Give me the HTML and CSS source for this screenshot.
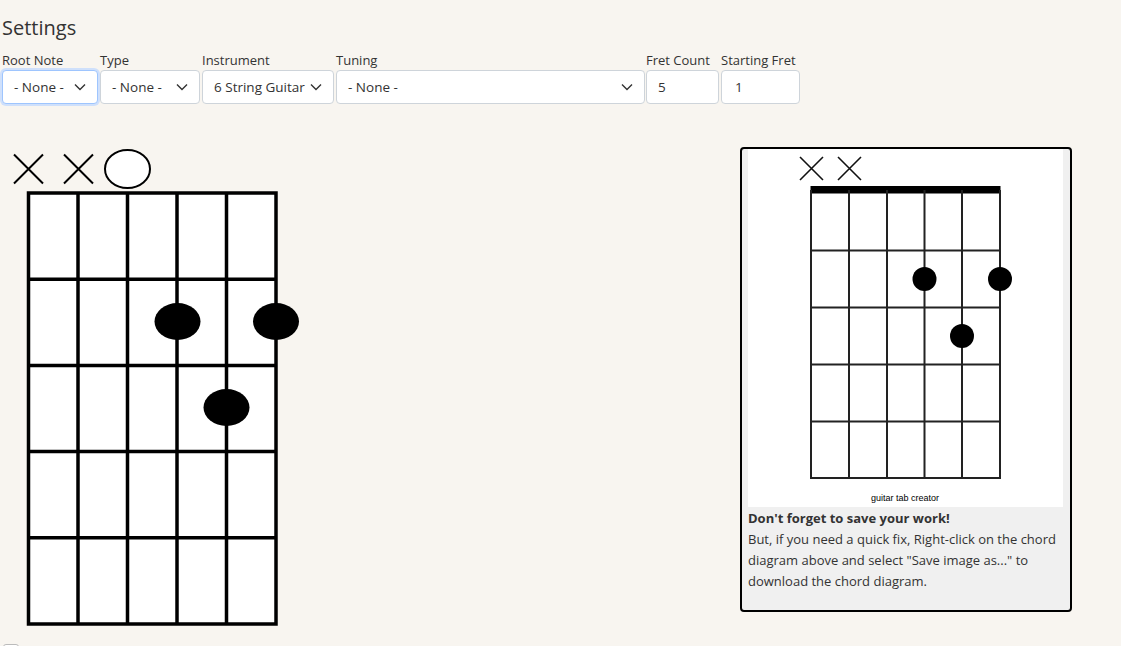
FILE: index.html
```html
<!DOCTYPE html>
<html lang="en">
<head>
<meta charset="utf-8">
<title>Settings</title>
<link rel="stylesheet" href="styles.css">
</head>
<body>
<div class="page">
  <h2 class="title">Settings</h2>
  <div class="form-row">
    <div class="field w-root">
      <label class="lbl">Root Note</label>
      <div class="ctrl focus"><span class="val">- None -</span><svg class="chev" viewBox="0 0 12 8"><path d="M1 1.5 L6 6.5 L11 1.5" fill="none" stroke="#333" stroke-width="1.4"/></svg></div>
    </div>
    <div class="field w-type">
      <label class="lbl">Type</label>
      <div class="ctrl"><span class="val">- None -</span><svg class="chev" viewBox="0 0 12 8"><path d="M1 1.5 L6 6.5 L11 1.5" fill="none" stroke="#333" stroke-width="1.4"/></svg></div>
    </div>
    <div class="field w-inst">
      <label class="lbl">Instrument</label>
      <div class="ctrl"><span class="val">6 String Guitar</span><svg class="chev" viewBox="0 0 12 8"><path d="M1 1.5 L6 6.5 L11 1.5" fill="none" stroke="#333" stroke-width="1.4"/></svg></div>
    </div>
    <div class="field w-tune">
      <label class="lbl">Tuning</label>
      <div class="ctrl"><span class="val">- None -</span><svg class="chev" viewBox="0 0 12 8"><path d="M1 1.5 L6 6.5 L11 1.5" fill="none" stroke="#333" stroke-width="1.4"/></svg></div>
    </div>
    <div class="field w-count">
      <label class="lbl">Fret Count</label>
      <div class="ctrl input"><span class="val">5</span></div>
    </div>
    <div class="field w-start">
      <label class="lbl">Starting Fret</label>
      <div class="ctrl input"><span class="val">1</span></div>
    </div>
  </div>

  <div class="main">
    <svg class="big" viewBox="0 147 320 490" width="320" height="490">
      <g stroke="#000" stroke-width="2" fill="none">
        <path d="M14 154.5 L43 183.5 M43 154.5 L14 183.5"/>
        <path d="M64 154.5 L93 183.5 M93 154.5 L64 183.5"/>
        <ellipse cx="127.5" cy="169" rx="22.5" ry="19" fill="#fff"/>
      </g>
      <rect x="28.5" y="193" width="247.5" height="431" fill="#fff" stroke="#000" stroke-width="3.5"/>
      <g stroke="#000" stroke-width="3.5">
        <line x1="78" y1="193" x2="78" y2="624"/>
        <line x1="127.5" y1="193" x2="127.5" y2="624"/>
        <line x1="177" y1="193" x2="177" y2="624"/>
        <line x1="226.5" y1="193" x2="226.5" y2="624"/>
        <line x1="28.5" y1="279.2" x2="276" y2="279.2"/>
        <line x1="28.5" y1="365.4" x2="276" y2="365.4"/>
        <line x1="28.5" y1="451.6" x2="276" y2="451.6"/>
        <line x1="28.5" y1="537.8" x2="276" y2="537.8"/>
      </g>
      <g fill="#000">
        <ellipse cx="177.5" cy="321.5" rx="23" ry="18.5"/>
        <ellipse cx="276" cy="321.5" rx="23" ry="18.5"/>
        <ellipse cx="226.5" cy="407.5" rx="23" ry="18.5"/>
      </g>
    </svg>

    <div class="card">
      <svg class="small" viewBox="748 149 315 358" width="315" height="358">
        <rect x="748" y="149" width="315" height="358" fill="#fff"/>
        <g stroke="#111" stroke-width="1.6" fill="none">
          <path d="M800 157 L823 180 M823 157 L800 180"/>
          <path d="M838 157 L861 180 M861 157 L838 180"/>
        </g>
        <rect x="810.5" y="186" width="190" height="7.5" fill="#000"/>
        <g stroke="#222" stroke-width="2">
          <line x1="811" y1="190" x2="811" y2="479"/>
          <line x1="849" y1="190" x2="849" y2="479"/>
          <line x1="887" y1="190" x2="887" y2="479"/>
          <line x1="924.5" y1="190" x2="924.5" y2="479"/>
          <line x1="962" y1="190" x2="962" y2="479"/>
          <line x1="1000" y1="190" x2="1000" y2="479"/>
          <line x1="810" y1="250.5" x2="1001" y2="250.5"/>
          <line x1="810" y1="307.5" x2="1001" y2="307.5"/>
          <line x1="810" y1="364.5" x2="1001" y2="364.5"/>
          <line x1="810" y1="421.5" x2="1001" y2="421.5"/>
          <line x1="810" y1="478" x2="1001" y2="478"/>
        </g>
        <g fill="#000">
          <circle cx="924.5" cy="279" r="12"/>
          <circle cx="1000" cy="279" r="12"/>
          <circle cx="962" cy="336" r="12"/>
        </g>
        <text x="905" y="500.5" text-anchor="middle" class="brand">guitar tab creator</text>
      </svg>
      <p class="note"><strong>Don't forget to save your work!</strong><br>But, if you need a quick fix, Right-click on the chord diagram above and select "Save image as..." to download the chord diagram.</p>
    </div>
  </div>
  <div class="check"></div>
</div>
</body>
</html>
```

FILE: styles.css
```css
html, body {
  margin: 0;
  padding: 0;
  height: 646px;
  overflow: hidden;
}
body {
  background: #f8f5f0;
  font-family: "Open Sans", "Noto Sans", sans-serif;
  color: #333;
}
.page {
  padding: 0 0 0 2px;
}
.title {
  margin: 16px 0 0 0;
  font-size: 20px;
  line-height: 24px;
  font-weight: 400;
  color: #333;
}
.form-row {
  display: flex;
  gap: 2px;
  margin-top: 12px;
}
.field {
  display: flex;
  flex-direction: column;
}
.lbl {
  font-size: 13px;
  line-height: 17px;
  margin-bottom: 1px;
  color: #333;
  white-space: nowrap;
}
.ctrl {
  box-sizing: border-box;
  height: 34px;
  background: #fff;
  border: 1px solid #ced4da;
  border-radius: 4px;
  display: flex;
  align-items: center;
  justify-content: space-between;
  padding: 0 11px 0 11px;
  font-size: 13.5px;
  color: #333;
}
.ctrl.focus {
  border-color: #9ec5fe;
  box-shadow: 0 0 0 2px #cfe0fb;
}
.ctrl.input {
  justify-content: flex-start;
}
.val {
  white-space: nowrap;
}
.chev {
  width: 12px;
  height: 8px;
  flex: none;
}
.w-root { width: 96px; }
.w-type { width: 100px; }
.w-inst { width: 132px; }
.w-tune { width: 309px; margin-right: -1px; }
.w-count { width: 73px; }
.w-start { width: 79px; }
.w-count .ctrl { padding-left: 11px; }
.w-start .ctrl { padding-left: 13px; }

.main {
  display: flex;
  align-items: flex-start;
  margin-top: 43px;
  height: 490px;
}
.big {
  display: block;
  margin-left: -2px;
  flex: none;
}
.card {
  box-sizing: border-box;
  width: 332px;
  margin-left: auto;
  margin-right: 49px;
  border: 2px solid #000;
  border-radius: 4px;
  background: #f0f0f0;
  padding: 0 6px 18px 6px;
}
.small {
  display: block;
}
.brand {
  font-family: "Liberation Sans", Arial, sans-serif;
  font-size: 9px;
  fill: #000;
}
.note {
  margin: 0;
  padding-top: 1px;
  font-size: 13px;
  line-height: 21px;
  color: #333;
}
.note strong {
  font-weight: 700;
}
.check {
  box-sizing: border-box;
  width: 16px;
  height: 16px;
  border: 1px solid #bbb;
  border-radius: 3px;
  background: #fff;
  margin: 7px 0 0 1px;
}
```
